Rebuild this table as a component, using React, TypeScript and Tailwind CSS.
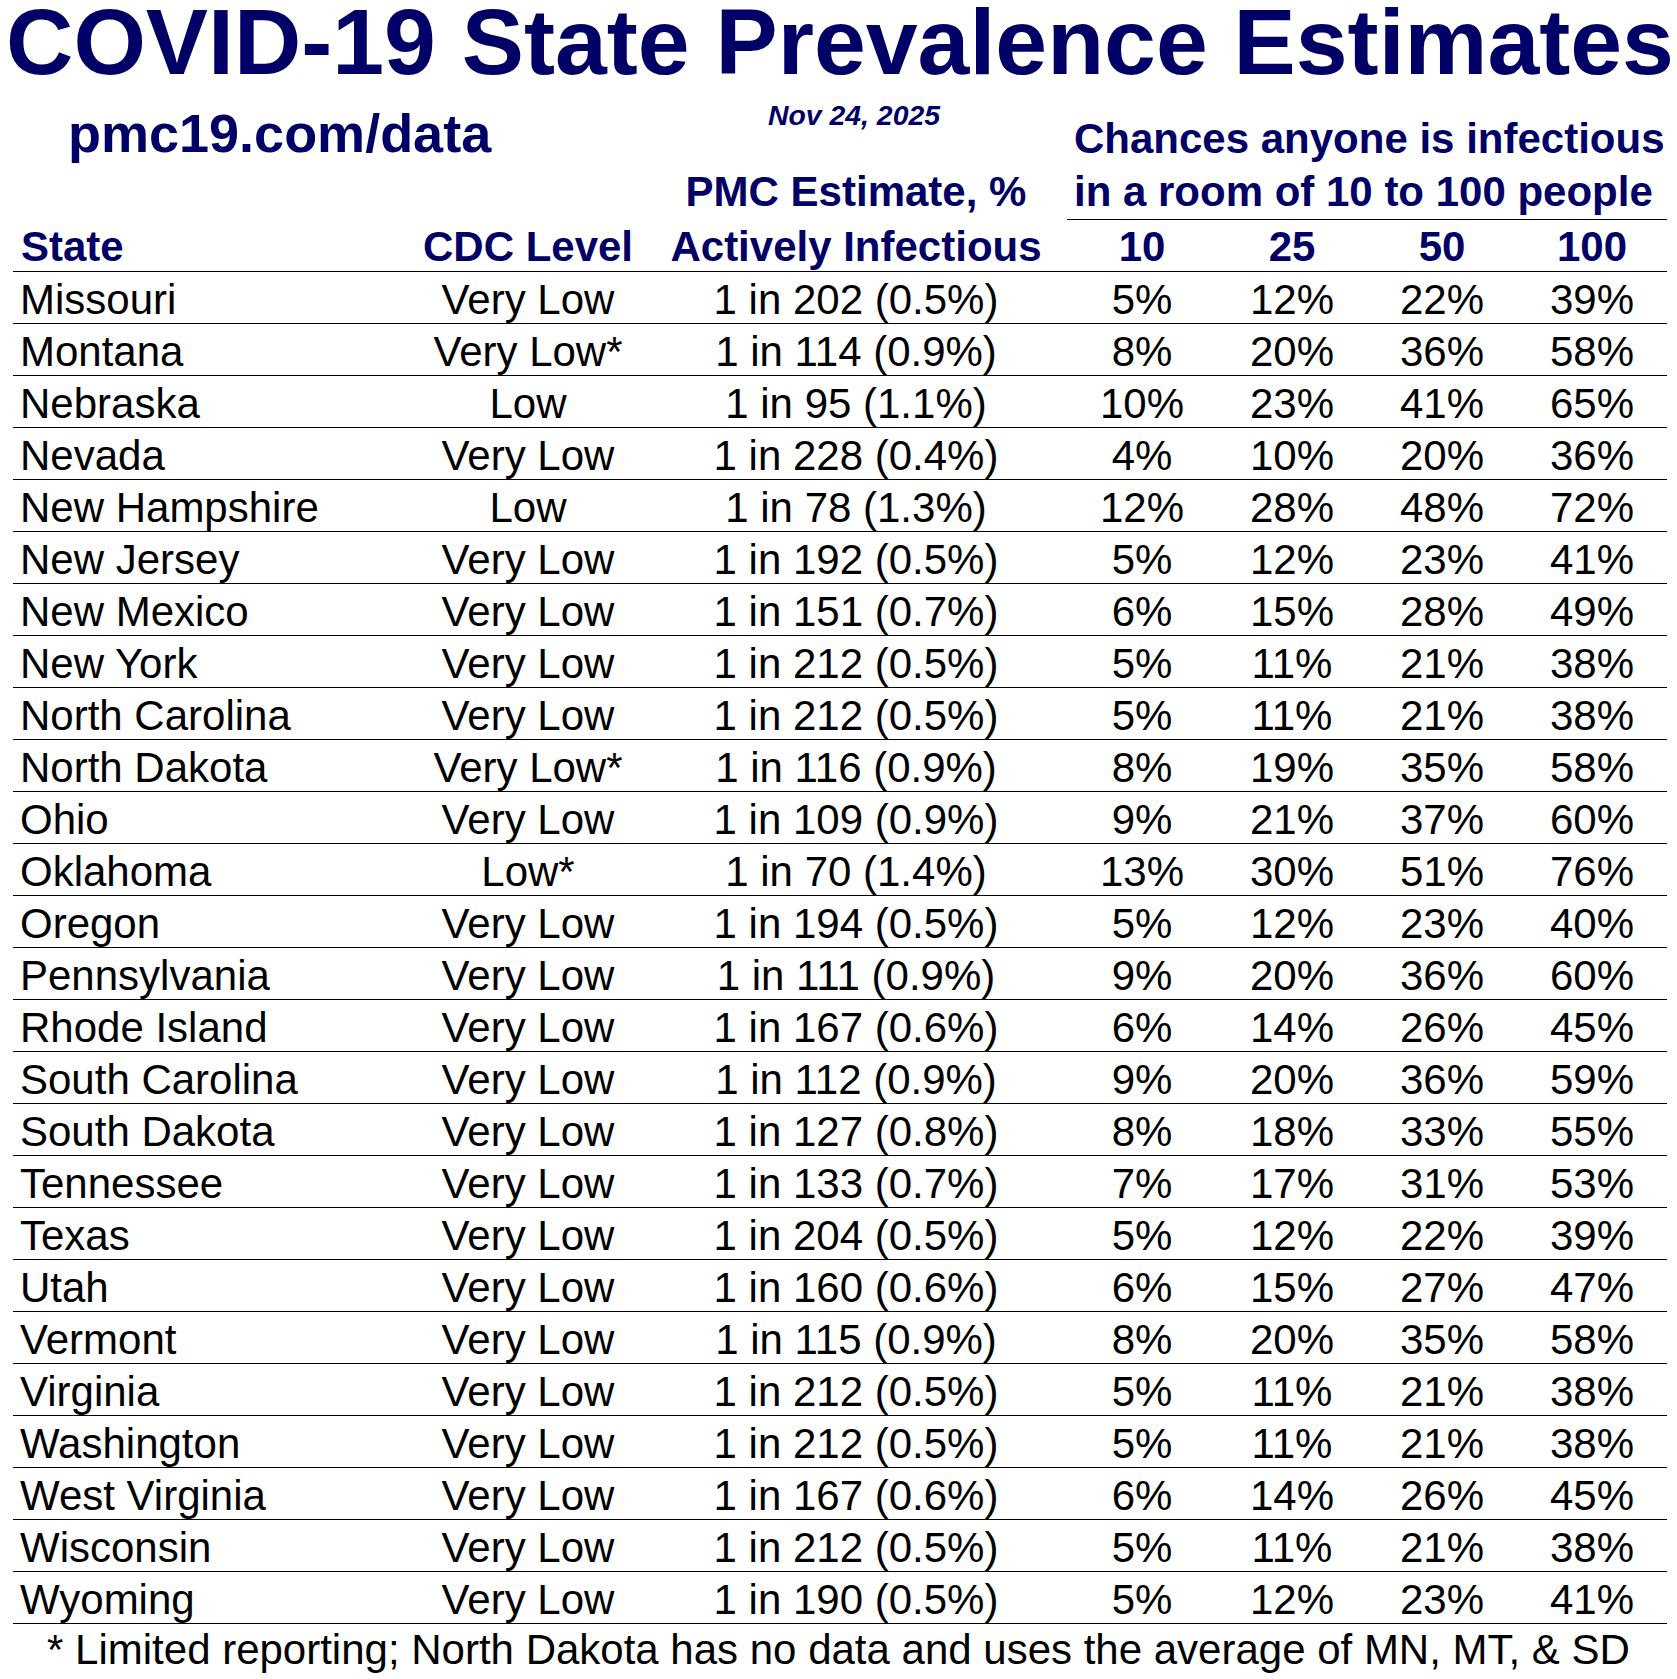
import React from "react";

type Row = [string, string, string, string, string, string, string];

// state, cdc level, estimate, then chances for 10 / 25 / 50 / 100 people
const rows: Row[] = [
  ["Missouri", "Very Low", "1 in 202 (0.5%)", "5%", "12%", "22%", "39%"],
  ["Montana", "Very Low*", "1 in 114 (0.9%)", "8%", "20%", "36%", "58%"],
  ["Nebraska", "Low", "1 in 95 (1.1%)", "10%", "23%", "41%", "65%"],
  ["Nevada", "Very Low", "1 in 228 (0.4%)", "4%", "10%", "20%", "36%"],
  ["New Hampshire", "Low", "1 in 78 (1.3%)", "12%", "28%", "48%", "72%"],
  ["New Jersey", "Very Low", "1 in 192 (0.5%)", "5%", "12%", "23%", "41%"],
  ["New Mexico", "Very Low", "1 in 151 (0.7%)", "6%", "15%", "28%", "49%"],
  ["New York", "Very Low", "1 in 212 (0.5%)", "5%", "11%", "21%", "38%"],
  ["North Carolina", "Very Low", "1 in 212 (0.5%)", "5%", "11%", "21%", "38%"],
  ["North Dakota", "Very Low*", "1 in 116 (0.9%)", "8%", "19%", "35%", "58%"],
  ["Ohio", "Very Low", "1 in 109 (0.9%)", "9%", "21%", "37%", "60%"],
  ["Oklahoma", "Low*", "1 in 70 (1.4%)", "13%", "30%", "51%", "76%"],
  ["Oregon", "Very Low", "1 in 194 (0.5%)", "5%", "12%", "23%", "40%"],
  ["Pennsylvania", "Very Low", "1 in 111 (0.9%)", "9%", "20%", "36%", "60%"],
  ["Rhode Island", "Very Low", "1 in 167 (0.6%)", "6%", "14%", "26%", "45%"],
  ["South Carolina", "Very Low", "1 in 112 (0.9%)", "9%", "20%", "36%", "59%"],
  ["South Dakota", "Very Low", "1 in 127 (0.8%)", "8%", "18%", "33%", "55%"],
  ["Tennessee", "Very Low", "1 in 133 (0.7%)", "7%", "17%", "31%", "53%"],
  ["Texas", "Very Low", "1 in 204 (0.5%)", "5%", "12%", "22%", "39%"],
  ["Utah", "Very Low", "1 in 160 (0.6%)", "6%", "15%", "27%", "47%"],
  ["Vermont", "Very Low", "1 in 115 (0.9%)", "8%", "20%", "35%", "58%"],
  ["Virginia", "Very Low", "1 in 212 (0.5%)", "5%", "11%", "21%", "38%"],
  ["Washington", "Very Low", "1 in 212 (0.5%)", "5%", "11%", "21%", "38%"],
  ["West Virginia", "Very Low", "1 in 167 (0.6%)", "6%", "14%", "26%", "45%"],
  ["Wisconsin", "Very Low", "1 in 212 (0.5%)", "5%", "11%", "21%", "38%"],
  ["Wyoming", "Very Low", "1 in 190 (0.5%)", "5%", "12%", "23%", "41%"],
];

const cols = "grid grid-cols-[407px_216px_431px_150px_150px_150px_150px]";

export default function App() {
  return (
    <div className="w-[1677px] min-h-[1679px] bg-white font-['Liberation_Sans',Arial,sans-serif] text-black">
      {/* Title */}
      <h1 className="h-[84px] -mb-[2px] pl-[3px] text-center text-[93.2px] leading-[84px] font-bold whitespace-nowrap text-[#000066]">
        COVID-19 State Prevalence Estimates
      </h1>

      <div className="ml-[13px] w-[1654px]">
        {/* Header block */}
        <div className={`${cols} text-[#000066] font-bold`}>
          <div className="col-span-2 h-[86px] pt-[24px] pl-[55px] text-[54px] leading-[54px] whitespace-nowrap">
            pmc19.com/data
          </div>
          <div className="h-[86px] pt-[19px] pl-[5px] text-center text-[28.4px] leading-[28px] italic whitespace-nowrap">
            Nov 24, 2025
          </div>
          <div className="col-span-4 h-[86px] pt-[33px] pl-[7px] text-[42px] leading-[48px] whitespace-nowrap">
            Chances anyone is infectious
          </div>

          <div className="col-span-2 h-[52px]" />
          <div className="h-[52px] pl-[9px] text-center text-[42px] leading-[48px] whitespace-nowrap">
            PMC Estimate, %
          </div>
          <div className="col-span-4 h-[52px] border-b border-black pl-[7px] text-[42px] leading-[48px] whitespace-nowrap">
            in a room of 10 to 100 people
          </div>
        </div>

        <div className={`${cols} h-[52px] border-b border-black pt-[3px] text-[42px] leading-[48px] font-bold text-[#000066] whitespace-nowrap`}>
          <div className="pl-[8px]">State</div>
          <div className="text-center">CDC Level</div>
          <div className="pl-[9px] text-center">Actively Infectious</div>
          <div className="text-center">10</div>
          <div className="text-center">25</div>
          <div className="text-center">50</div>
          <div className="text-center">100</div>
        </div>

        {/* Table body */}
        {rows.map((r) => (
          <div
            key={r[0]}
            className={`${cols} h-[52px] border-b border-black pt-[4px] text-[42px] leading-[48px] whitespace-nowrap`}
          >
            <div className="pl-[7px]">{r[0]}</div>
            <div className="text-center">{r[1]}</div>
            <div className="pl-[9px] text-center">{r[2]}</div>
            <div className="text-center">{r[3]}</div>
            <div className="text-center">{r[4]}</div>
            <div className="text-center">{r[5]}</div>
            <div className="text-center">{r[6]}</div>
          </div>
        ))}
      </div>

      <p className="pt-[2px] text-center text-[42px] leading-[48px] whitespace-nowrap">
        * Limited reporting; North Dakota has no data and uses the average of MN, MT, &amp; SD
      </p>
    </div>
  );
}
